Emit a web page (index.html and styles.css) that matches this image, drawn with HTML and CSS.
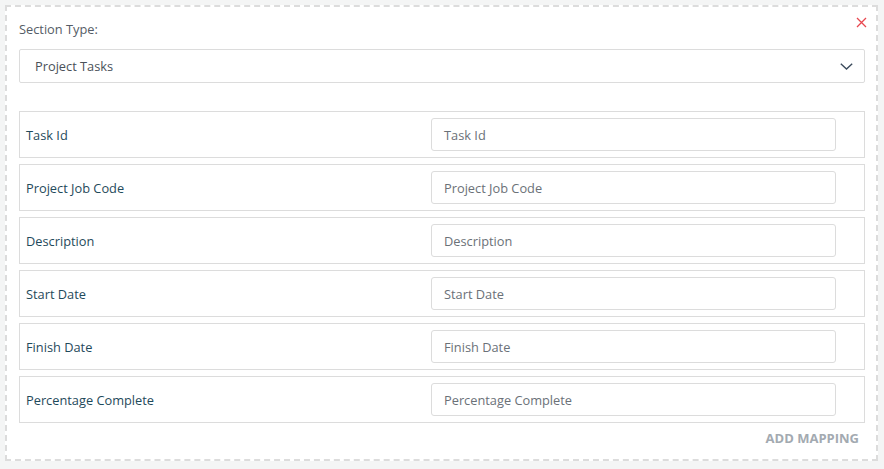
FILE: index.html
```html
<!DOCTYPE html>
<html lang="en">
<head>
<meta charset="utf-8">
<title>Section Mapping</title>
<link rel="stylesheet" href="styles.css">
</head>
<body>
<div class="panel">
  <button class="close" type="button" aria-label="Remove section">
    <svg width="11" height="11" viewBox="0 0 11 11"><path d="M1 1L10 10M10 1L1 10" stroke="#e8474f" stroke-width="1.3" fill="none"/></svg>
  </button>
  <div class="section-label">Section Type:</div>
  <div class="select">
    <span>Project Tasks</span>
    <svg class="chev" width="13" height="7" viewBox="0 0 13 7"><path d="M0.8 0.8L6.5 6L12.2 0.8" stroke="#3b4b5c" stroke-width="1.4" fill="none"/></svg>
  </div>
  <div class="rows">
    <div class="row"><div class="name">Task Id</div><div class="input">Task Id</div></div>
    <div class="row"><div class="name">Project Job Code</div><div class="input">Project Job Code</div></div>
    <div class="row"><div class="name">Description</div><div class="input">Description</div></div>
    <div class="row"><div class="name">Start Date</div><div class="input">Start Date</div></div>
    <div class="row"><div class="name">Finish Date</div><div class="input">Finish Date</div></div>
    <div class="row"><div class="name">Percentage Complete</div><div class="input">Percentage Complete</div></div>
  </div>
  <div class="actions"><span class="add">ADD MAPPING</span></div>
</div>
</body>
</html>
```

FILE: styles.css
```css
html, body {
  margin: 0;
  padding: 0;
  background: #f4f5f5;
  font-family: "Open Sans", "Noto Sans", sans-serif;
  font-size: 12.8px;
}
.panel {
  position: relative;
  margin: 5px 6px 0 5px;
  border: 2px dashed #dcdcdc;
  background: #fff;
  padding: 12px 11px 11px 12px;
}
.close {
  position: absolute;
  top: 10px;
  right: 9px;
  width: 11px;
  height: 11px;
  padding: 0;
  border: 0;
  background: none;
  display: flex;
}
.section-label {
  line-height: 20px;
  color: #555c66;
  margin-bottom: 10px;
}
.select {
  height: 34px;
  box-sizing: border-box;
  border: 1px solid #dcdcdc;
  border-radius: 2px;
  display: flex;
  align-items: center;
  justify-content: space-between;
  padding: 0 11px 0 15px;
  color: #4a5159;
}
.chev { margin-top: 1px; }
.rows {
  margin-top: 28px;
  display: flex;
  flex-direction: column;
  gap: 6px;
}
.row {
  border: 1px solid #dcdcdc;
  padding: 6px 28px 6px 6px;
  display: grid;
  grid-template-columns: 1fr 405px;
  align-items: center;
}
.name {
  color: #1f4a5b;
}
.input {
  height: 33px;
  box-sizing: border-box;
  border: 1px solid #dcdcdc;
  border-radius: 3px;
  padding: 0 12px;
  display: flex;
  align-items: center;
  color: #6b7178;
}
.actions {
  margin-top: 5px;
  line-height: 20px;
  text-align: right;
  padding-right: 6px;
}
.add {
  font-weight: 700;
  color: #a3aab1;
  font-size: 13px;
}
```
